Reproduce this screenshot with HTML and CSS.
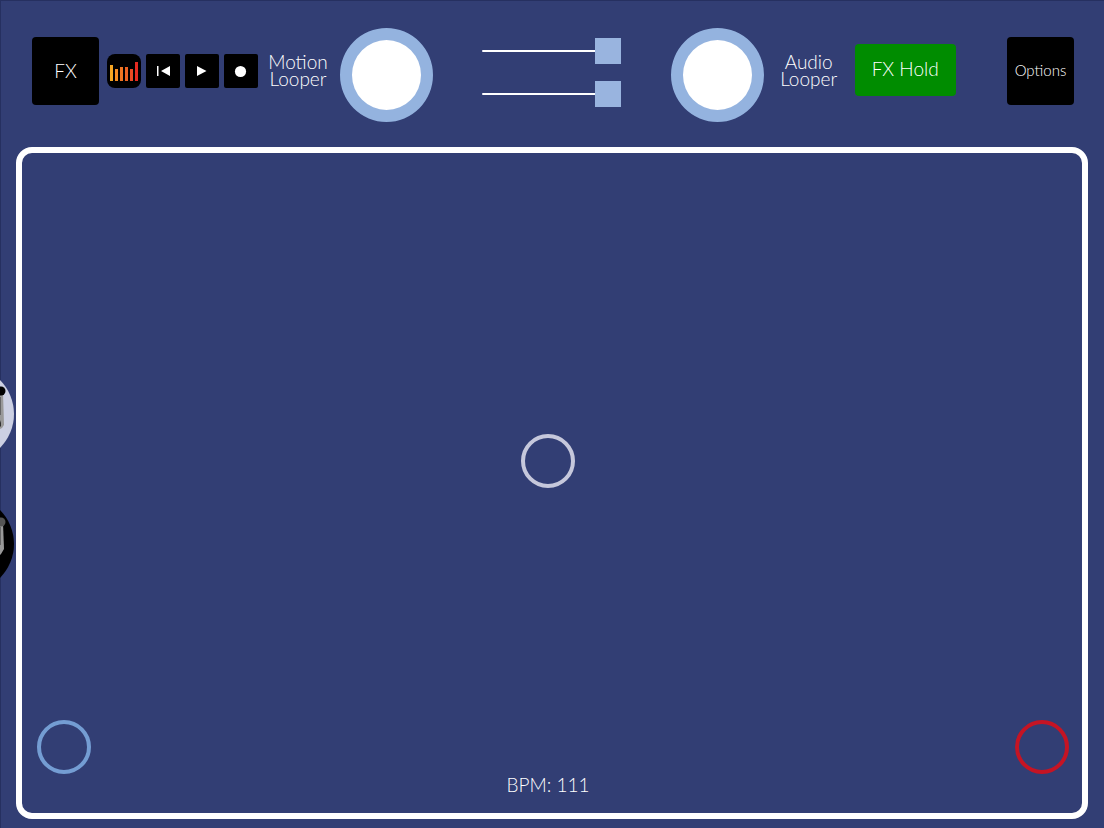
FILE: index.html
```html
<!DOCTYPE html>
<html lang="en">
<head>
<meta charset="utf-8">
<meta name="viewport" content="width=device-width, initial-scale=1">
<title>Motion Looper</title>
<link rel="stylesheet" href="styles.css">
</head>
<body>
<header class="toolbar">
  <div class="group">
    <button class="tile" type="button">FX</button>
    <div class="transport">
      <button class="levels" type="button" aria-label="Levels">
        <svg viewBox="0 0 34 34" aria-hidden="true">
          <path fill="#f5a623" d="M3 11h3v16H3z"/>
          <path fill="#f58a22" d="M8 15h3v12H8z"/>
          <path fill="#f07522" d="M13 13h3v14h-3z"/>
          <path fill="#ec6223" d="M18 13h3v14h-3z"/>
          <path fill="#e84a23" d="M23 15h3v12h-3z"/>
          <path fill="#e52a20" d="M28 8h3v19h-3z"/>
        </svg>
      </button>
      <button class="key" type="button" aria-label="Back to start">
        <svg viewBox="0 0 34 34" aria-hidden="true"><path fill="#fff" d="M11 12h1.500v10h-1.500zM24 12v10l-9-5z"/></svg>
      </button>
      <button class="key" type="button" aria-label="Play">
        <svg viewBox="0 0 34 34" aria-hidden="true"><path fill="#fff" d="M12 12v10l9.500-5z"/></svg>
      </button>
      <button class="key" type="button" aria-label="Record">
        <svg viewBox="0 0 34 34" aria-hidden="true"><circle cx="16.500" cy="17.500" r="5.600" fill="#fff"/></svg>
      </button>
    </div>
    <span class="name name-motion">Motion<br>Looper</span>
    <button class="dial" type="button" aria-label="Motion Looper"></button>
  </div>
  <div class="sliders">
    <input class="slider" type="range" min="0" max="100" value="100" aria-label="Motion level">
    <input class="slider" type="range" min="0" max="100" value="100" aria-label="Audio level">
  </div>
  <div class="group group-audio">
    <button class="dial" type="button" aria-label="Audio Looper"></button>
    <span class="name name-audio">Audio<br>Looper</span>
    <button class="hold" type="button">FX Hold</button>
  </div>
  <button class="tile tile-options" type="button">Options</button>
</header>
<main class="pad">
  <button class="ring ring-center" type="button" aria-label="Center point"></button>
  <button class="ring ring-blue" type="button" aria-label="Blue point"></button>
  <button class="ring ring-red" type="button" aria-label="Red point"></button>
  <p class="bpm">BPM: 111</p>
</main>
<svg class="side side-light" viewBox="0 0 14 70" aria-hidden="true">
  <circle cx="-34" cy="35" r="48" fill="#ccd0e2"/>
  <path fill="#999" d="M0 14h3l1 32-2 3-2 1z"/>
  <path fill="#666" d="M0 18h1v18H0z"/>
  <path fill="#333" d="M0 41l1 3v3l-1 1z"/>
  <circle cx="1" cy="12" r="4.500"/>
</svg>
<svg class="side side-dark" viewBox="0 0 14 70" aria-hidden="true">
  <circle cx="-34" cy="35" r="48"/>
  <path fill="#999" d="M0 14h3l1 26-3 5-1 1z"/>
  <path fill="#666" d="M0 18h1v18H0z"/>
  <circle cx="1" cy="13" r="4.500" fill="#555"/>
</svg>
</body>
</html>
```
FILE: styles.css
```css
* {
  box-sizing: border-box;
}

body {
  position: relative;
  display: flex;
  flex-direction: column;
  min-height: 100vh;
  margin: 0;
  background: #323e74;
  box-shadow: inset 1px 1px #263060;
  color: #fff;
  font-family: "Century Gothic", Lato, sans-serif;
  font-size: 19px;
  font-weight: 300;
}

button {
  padding: 0;
  border: 0;
  color: inherit;
  font: inherit;
}

.toolbar {
  display: flex;
  align-items: center;
  justify-content: space-between;
  padding: 20px 30px 25px 32px;
}

.group {
  display: flex;
  align-items: center;
}

.group-audio {
  margin-right: 2px;
}

.tile {
  width: 67px;
  height: 68px;
  padding-bottom: 2px;
  border-radius: 4px;
  background: #000;
}

.tile-options {
  font-size: 15px;
}

.transport {
  display: flex;
  gap: 5px;
  margin-left: 8px;
}

.levels,
.key {
  width: 34px;
  height: 34px;
  border-radius: 2px;
  background: #000;
}

.levels {
  border-radius: 8px;
}

.levels svg,
.key svg {
  display: block;
}

.name {
  width: 60px;
  padding-bottom: 2px;
  line-height: 17px;
  text-align: center;
}

.name-motion {
  margin: 0 12px 0 10px;
}

.name-audio {
  margin: 0 16px 0 15px;
}

.dial {
  width: 93px;
  height: 94px;
  margin-top: 8px;
  border: 12px solid #94b3df;
  border-radius: 50%;
  background: #fff;
}

.sliders {
  display: flex;
  flex-direction: column;
  gap: 17px;
  margin-top: 2px;
}

.slider {
  width: 139px;
  height: 26px;
  margin: 0;
  appearance: none;
  background: none;
}

.slider::-webkit-slider-runnable-track {
  height: 2px;
  border-radius: 1px;
  background: #fff;
}

.slider::-webkit-slider-thumb {
  width: 26px;
  height: 26px;
  margin-top: -12px;
  appearance: none;
  background: #99b4df;
}

.hold {
  width: 101px;
  height: 52px;
  margin-bottom: 3px;
  padding-bottom: 2px;
  border-radius: 4px;
  background: #008c00;
}

.pad {
  position: relative;
  display: flex;
  flex: 1;
  align-items: flex-end;
  justify-content: center;
  margin: 0 16px 9px;
  border: 6px solid #fff;
  border-radius: 16px;
}

.ring {
  position: absolute;
  width: 54px;
  height: 54px;
  border: 4px solid #c6c8dc;
  border-radius: 50%;
  background: none;
}

.ring-center {
  top: 281px;
  left: calc(50% - 31px);
}

.ring-blue {
  bottom: 39px;
  left: 15px;
  border-color: #749dd3;
}

.ring-red {
  right: 13px;
  bottom: 39px;
  border-color: #c51424;
}

.bpm {
  margin: 0 8px 16px 0;
  line-height: 24px;
}

.side {
  position: absolute;
  left: 0;
  width: 14px;
  height: 70px;
}

.side-light {
  top: 379px;
}

.side-dark {
  top: 509px;
}
```
